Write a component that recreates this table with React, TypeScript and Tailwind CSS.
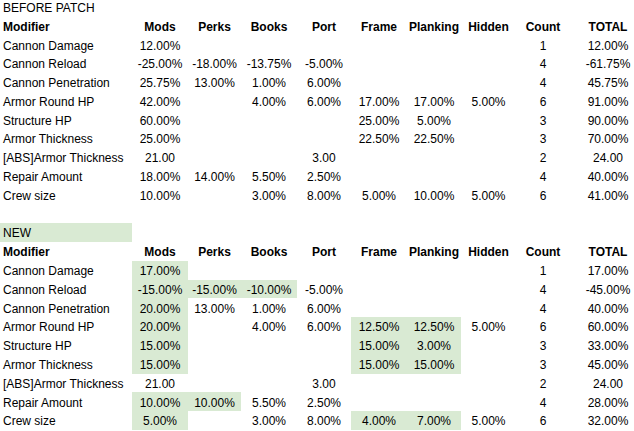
import React from "react";

type Row = { name: string; cells: string[]; green?: number[] };

const COLS = ["Mods", "Perks", "Books", "Port", "Frame", "Planking", "Hidden", "Count", "TOTAL"];

const BEFORE: Row[] = [
  { name: "Cannon Damage", cells: ["12.00%", "", "", "", "", "", "", "1", "12.00%"] },
  { name: "Cannon Reload", cells: ["-25.00%", "-18.00%", "-13.75%", "-5.00%", "", "", "", "4", "-61.75%"] },
  { name: "Cannon Penetration", cells: ["25.75%", "13.00%", "1.00%", "6.00%", "", "", "", "4", "45.75%"] },
  { name: "Armor Round HP", cells: ["42.00%", "", "4.00%", "6.00%", "17.00%", "17.00%", "5.00%", "6", "91.00%"] },
  { name: "Structure HP", cells: ["60.00%", "", "", "", "25.00%", "5.00%", "", "3", "90.00%"] },
  { name: "Armor Thickness", cells: ["25.00%", "", "", "", "22.50%", "22.50%", "", "3", "70.00%"] },
  { name: "[ABS]Armor Thickness", cells: ["21.00", "", "", "3.00", "", "", "", "2", "24.00"] },
  { name: "Repair Amount", cells: ["18.00%", "14.00%", "5.50%", "2.50%", "", "", "", "4", "40.00%"] },
  { name: "Crew size", cells: ["10.00%", "", "3.00%", "8.00%", "5.00%", "10.00%", "5.00%", "6", "41.00%"] },
];

const AFTER: Row[] = [
  { name: "Cannon Damage", cells: ["17.00%", "", "", "", "", "", "", "1", "17.00%"], green: [0] },
  { name: "Cannon Reload", cells: ["-15.00%", "-15.00%", "-10.00%", "-5.00%", "", "", "", "4", "-45.00%"], green: [0, 1, 2] },
  { name: "Cannon Penetration", cells: ["20.00%", "13.00%", "1.00%", "6.00%", "", "", "", "4", "40.00%"], green: [0] },
  { name: "Armor Round HP", cells: ["20.00%", "", "4.00%", "6.00%", "12.50%", "12.50%", "5.00%", "6", "60.00%"], green: [0, 4, 5] },
  { name: "Structure HP", cells: ["15.00%", "", "", "", "15.00%", "3.00%", "", "3", "33.00%"], green: [0, 4, 5] },
  { name: "Armor Thickness", cells: ["15.00%", "", "", "", "15.00%", "15.00%", "", "3", "45.00%"], green: [0, 4, 5] },
  { name: "[ABS]Armor Thickness", cells: ["21.00", "", "", "3.00", "", "", "", "2", "24.00"] },
  { name: "Repair Amount", cells: ["10.00%", "10.00%", "5.50%", "2.50%", "", "", "", "4", "28.00%"], green: [0, 1] },
  { name: "Crew size", cells: ["5.00%", "", "3.00%", "8.00%", "4.00%", "7.00%", "5.00%", "6", "32.00%"], green: [0, 4, 5] },
];

const grid =
  "grid grid-cols-[132px_56px_53px_56px_54px_56px_54px_55px_54px_76px] w-[646px]";

function Cell({
  children,
  left,
  bold,
  green,
}: {
  children?: React.ReactNode;
  left?: boolean;
  bold?: boolean;
  green?: boolean;
}) {
  return (
    <div
      className={[
        "h-[18.8px] flex items-end pb-[1.5px] leading-[14px] whitespace-nowrap overflow-hidden",
        left ? "justify-start pl-[3px]" : "justify-center",
        bold ? "font-bold" : "",
        green ? "bg-[#d9ead3]" : "",
      ].join(" ")}
    >
      {children}
    </div>
  );
}

function Section({ title, rows, titleGreen }: { title: string; rows: Row[]; titleGreen?: boolean }) {
  return (
    <>
      <div className={grid}>
        <Cell left green={titleGreen}>
          {title}
        </Cell>
      </div>
      <div className={grid}>
        <Cell left bold>
          Modifier
        </Cell>
        {COLS.map((c) => (
          <Cell key={c} bold>
            {c}
          </Cell>
        ))}
      </div>
      {rows.map((r) => (
        <div key={r.name} className={grid}>
          <Cell left>{r.name}</Cell>
          {r.cells.map((v, i) => (
            <Cell key={i} green={r.green?.includes(i)}>
              {v}
            </Cell>
          ))}
        </div>
      ))}
    </>
  );
}

export default function App() {
  return (
    <div className="w-[634px] h-[431px] overflow-hidden bg-white text-black text-[12px] font-['Liberation_Sans',Arial,sans-serif]">
      <div className="-mt-[2.4px]">
        <Section title="BEFORE PATCH" rows={BEFORE} />
        <div className="h-[18.8px]" />
        <Section title="NEW" rows={AFTER} titleGreen />
      </div>
    </div>
  );
}
